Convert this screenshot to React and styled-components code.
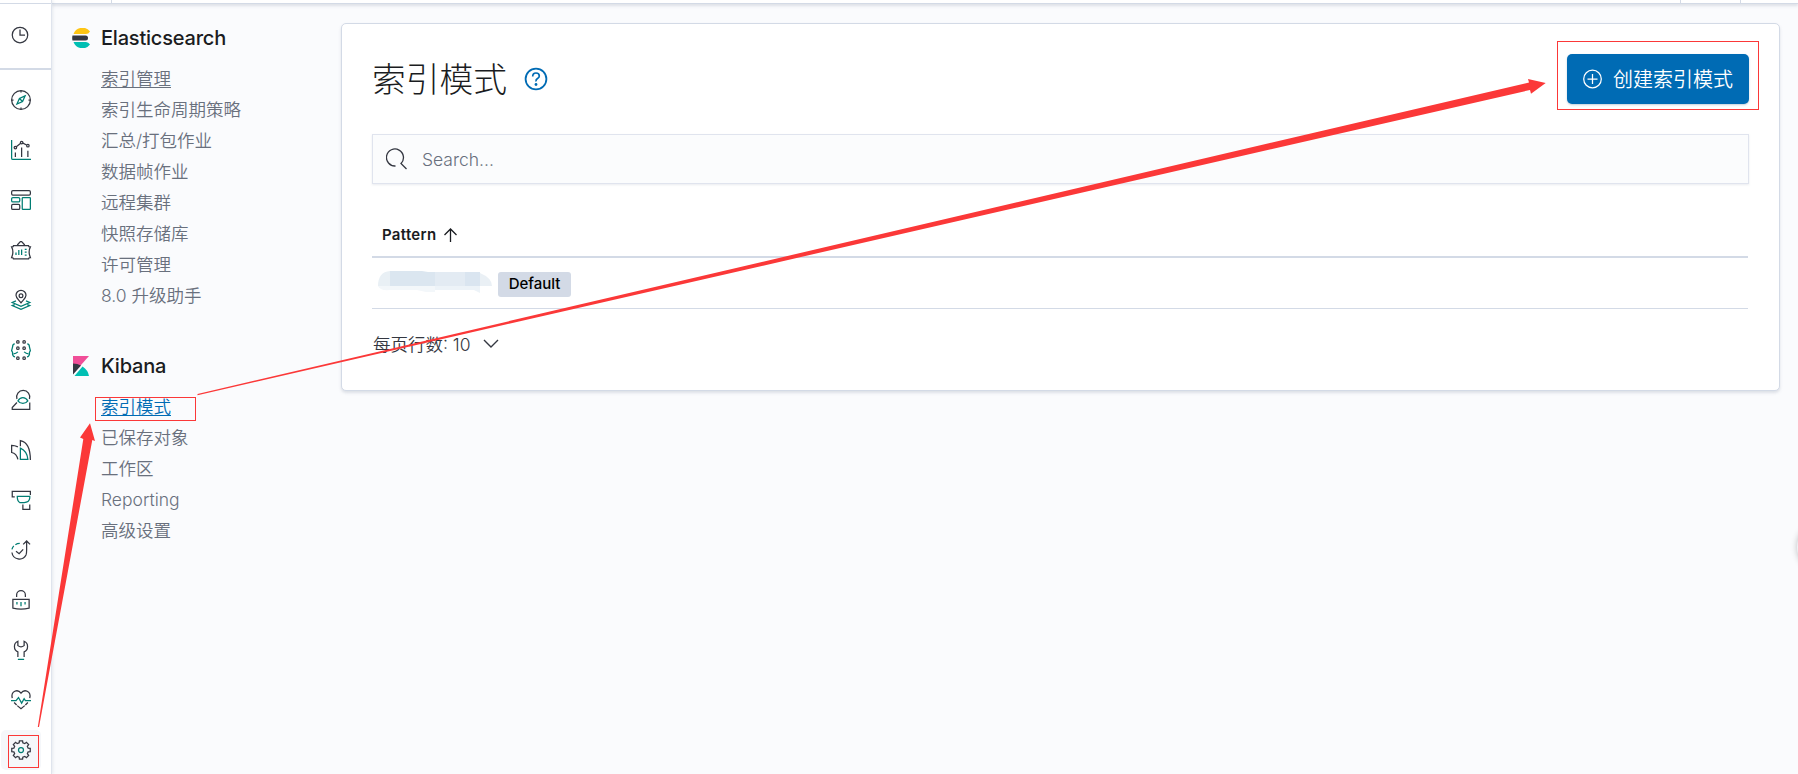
import React from "react";
import styled, { createGlobalStyle } from "styled-components";

const colors = {
  ink: "#343741",
  title: "#1a1c21",
  subdued: "#69707d",
  primary: "#006bb4",
  teal: "#017d73",
  border: "#d3dae6",
  page: "#fafbfd",
  white: "#ffffff",
  mark: "#fb3838",
};

const font = `Inter, "Noto Sans CJK SC", sans-serif`;

const GlobalStyle = createGlobalStyle`
  * {
    box-sizing: border-box;
  }

  body {
    margin: 0;
    overflow: hidden;
    font-family: ${font};
    font-size: 17.5px;
    color: ${colors.ink};
    background-color: ${colors.page};
  }
`;

const Page = styled.div`
  position: relative;
  display: flex;
  width: 100%;
  height: 100vh;
  overflow: hidden;
`;

const Rail = styled.nav`
  display: flex;
  flex-direction: column;
  flex: none;
  width: 52px;
  padding-top: 3px;
  background-color: ${colors.white};
  border-right: 1px solid #dfe4ed;
  box-shadow: 1px 0 3px rgba(152, 162, 179, 0.2);
  z-index: 1;
`;

const RecentItem = styled.div`
  display: flex;
  align-items: center;
  flex: none;
  height: 67px;
  padding: 0 0 2px 10px;
  border-top: 1px solid ${colors.border};
  border-bottom: 2px solid ${colors.border};
`;

const RailList = styled.div`
  display: flex;
  flex-direction: column;
  padding-top: 5px;
`;

const RailItem = styled.div`
  display: flex;
  align-items: center;
  justify-content: center;
  width: 40px;
  height: 40px;
  margin: 5px 0 5px 1px;
  border-radius: 5px;
  background-color: ${(props) => (props.$active ? "#f5f7fa" : "transparent")};
`;

const AppIcon = styled.svg`
  display: block;
  width: 20px;
  height: 20px;
  fill: none;
  stroke: ${colors.ink};
  stroke-width: 2;
  overflow: visible;

  .accent {
    stroke: ${colors.teal};
  }
`;

const Content = styled.div`
  display: flex;
  flex-direction: column;
  flex: 1;
  min-width: 0;
`;

const TopBar = styled.header`
  display: flex;
  justify-content: space-between;
  flex: none;
  height: 4px;
  padding-right: 57px;
  background-color: ${colors.white};
  border-bottom: 1px solid ${colors.border};
  box-shadow: 0 2px 3px rgba(152, 162, 179, 0.3);
`;

const TopCell = styled.div`
  width: ${(props) => props.$width}px;
  border-right: 1px solid ${colors.border};
  border-left: ${(props) => (props.$both ? `1px solid ${colors.border}` : "0")};
`;

const Body = styled.div`
  display: flex;
  align-items: flex-start;
  padding: 19px 18px 0 20px;
`;

const SideNav = styled.aside`
  display: flex;
  flex-direction: column;
  gap: 40px;
  flex: none;
  width: 269px;
`;

const SideHeading = styled.h2`
  display: flex;
  align-items: center;
  gap: 9px;
  height: 30px;
  margin: 0 0 10px;
  font-size: 20px;
  font-weight: 500;
  letter-spacing: -0.01em;
  color: ${colors.title};

  svg {
    display: block;
    width: 20px;
    height: 20px;
  }
`;

const SideLinks = styled.ul`
  margin: 0;
  padding: 0 0 0 29px;
  list-style: none;
`;

const SideLink = styled.li`
  height: 31px;
  line-height: 31px;
  font-weight: 350;
  white-space: nowrap;
  color: ${(props) => (props.$active ? colors.primary : colors.subdued)};
  text-decoration: ${(props) => (props.$underline ? "underline" : "none")};
  text-decoration-thickness: 1px;
  text-underline-offset: 2px;
`;

const Panel = styled.main`
  flex: 1;
  height: 368px;
  padding: 30px;
  background-color: ${colors.white};
  border: 1px solid ${colors.border};
  border-radius: 5px;
  box-shadow: 0 2px 3px rgba(152, 162, 179, 0.3);
`;

const PanelHeader = styled.div`
  display: flex;
  align-items: center;
  justify-content: space-between;
  height: 50px;
`;

const Heading = styled.div`
  display: flex;
  align-items: center;
  gap: 17px;

  h1 {
    margin: 0;
    padding-top: 2px;
    font-size: 33.75px;
    font-weight: 300;
    line-height: 50px;
    color: ${colors.title};
  }

  svg {
    display: block;
    width: 24px;
    height: 24px;
  }
`;

const CreateButton = styled.button`
  display: flex;
  align-items: center;
  gap: 10px;
  width: 182px;
  height: 50px;
  padding: 0 0 1px 15px;
  border: 0;
  border-radius: 5px;
  font-family: ${font};
  font-size: 20px;
  font-weight: 350;
  white-space: nowrap;
  color: ${colors.white};
  background-color: ${colors.primary};
  box-shadow: 0 1px 2px rgba(54, 97, 126, 0.3);
`;

const SearchBox = styled.div`
  display: flex;
  align-items: center;
  gap: 15px;
  height: 50px;
  margin-top: 30px;
  padding-left: 13px;
  font-weight: 350;
  color: ${colors.subdued};
  background-color: #fbfcfd;
  border: 1px solid #e0e4ee;
  box-shadow: 0 1px 2px rgba(152, 162, 179, 0.2);
`;

const TableHead = styled.div`
  display: flex;
  align-items: center;
  gap: 7px;
  height: 54px;
  margin: 20px 1px 0 0;
  padding: 9px 0 0 10px;
  font-size: 15px;
  font-weight: 600;
  letter-spacing: 0.02em;
  color: ${colors.title};
  border-bottom: 2px solid ${colors.border};
`;

const TableRow = styled.div`
  display: flex;
  align-items: center;
  gap: 5px;
  height: 51px;
  margin-right: 1px;
  padding: 2px 0 0 6px;
  border-bottom: 1px solid ${colors.border};
`;

const HiddenName = styled.svg`
  display: block;
  width: 115px;
  height: 24px;
  margin-top: -5px;
`;

const Badge = styled.span`
  display: inline-flex;
  align-items: center;
  justify-content: center;
  width: 73px;
  height: 25px;
  padding-bottom: 1px;
  border-radius: 3px;
  font-size: 15px;
  font-weight: 500;
  color: #000;
  background-color: ${colors.border};
`;

const Pagination = styled.div`
  display: flex;
  align-items: center;
  gap: 12px;
  height: 30px;
  margin-top: 19px;
  padding-left: 1px;
  font-weight: 350;

  svg {
    margin-top: 2px;
  }
`;

const FloatingHandle = styled.div`
  position: absolute;
  top: 522px;
  left: 1797px;
  width: 50px;
  height: 50px;
  border-radius: 50%;
  background-color: #f1f1f5;
  box-shadow: 0 0 6px rgba(0, 0, 0, 0.25);
`;

const Annotations = styled.svg`
  position: absolute;
  top: 0;
  left: 0;
  z-index: 2;
  pointer-events: none;
`;

// outline of the settings cog, eight flat teeth on a 32px grid
const cogPath = () => {
  const points = [];
  for (let i = 0; i < 8; i++) {
    const a = (i * Math.PI) / 4;
    [
      [-0.25, 11.8],
      [-0.17, 15],
      [0.17, 15],
      [0.25, 11.8],
    ].forEach(([offset, r]) => {
      const x = 16 + r * Math.sin(a + offset);
      const y = 16 - r * Math.cos(a + offset);
      points.push(`${x.toFixed(2)} ${y.toFixed(2)}`);
    });
  }
  return `M${points.join("L")}Z`;
};

const railIcons = {
  discover: (
    <>
      <circle cx="16" cy="16" r="15" />
      <path d="M16 1v3M16 28v3M1 16h3M28 16h3" />
      <path className="accent" d="M22.5 9.5l-9 4-4 9 9-4zM14 14l4 4" />
    </>
  ),
  visualize: (
    <>
      <path className="accent" d="M1 0v29a2 2 0 0 0 2 2h29" />
      <circle cx="7" cy="12" r="2" />
      <circle cx="17" cy="4" r="2" />
      <circle cx="27" cy="9" r="2" />
      <path d="M8.5 10.7l7-5.5M19 5l6 3M7 20v7M17 12v15M27 17v10" />
    </>
  ),
  dashboard: (
    <>
      <rect x="1" y="1" width="30" height="7" rx="2" />
      <rect x="1" y="23" width="13" height="8" rx="2" />
      <rect className="accent" x="1" y="12" width="13" height="7" rx="2" />
      <rect className="accent" x="18" y="12" width="13" height="19" rx="1" />
    </>
  ),
  canvas: (
    <>
      <path d="M4 9h24q0 2 3 2-2 4-2 8t2 9q-3 0-3 2H4q0-2-3-2 2-5 2-9t-2-8q3 0 3-2zM10 8l5-5.5h2L22 8" />
      <path
        className="accent"
        d="M8 20v4M12.5 16v8M17 15v9M22 15h3M22 19.5h3M22 24h3"
      />
    </>
  ),
  maps: (
    <>
      <path d="M16 20.500c-3-4-8-7-8-12a8 8 0 0 1 16 0c0 5-5 8-8 12z" />
      <circle cx="16" cy="9" r="3" />
      <path
        className="accent"
        d="M8 17.500l-6 2.500 14 6 14-6-6-2.500M6 23.500l-4 1.500 14 6 14-6-4-1.500"
      />
    </>
  ),
  machineLearning: (
    <>
      <circle cx="11" cy="3" r="2" />
      <circle cx="21" cy="3" r="2" />
      <circle cx="11" cy="13" r="2" />
      <circle cx="21" cy="13" r="2" />
      <circle cx="11" cy="29" r="2" />
      <circle cx="21" cy="29" r="2" />
      <path
        className="accent"
        d="M6 6Q2.500 6 2.500 11L1 17l1.500 3v3q1 4 4 4M4 22q4 0 7-3M26 6q3.500 0 3.500 5l1.500 6-1.500 3v3q-1 4-4 4M28 22q-4 0-7-3"
      />
    </>
  ),
  infra: (
    <>
      <path d="M9.500 14.500a10.500 10.500 0 1 1 20 0M9.500 20L2 28v3h28V20" />
      <path
        className="accent"
        d="M11 17.500q3-5.500 8-5.500t8 5.500q-3 4-8 4t-8-4z"
      />
    </>
  ),
  apm: (
    <>
      <path d="M11 11Q6 8.500 1 8.500V20q8 1.500 10 11M15 10V1q16 3 16 31" />
      <path className="accent" d="M15 13v18h12q-1-13-12-18z" />
    </>
  ),
  logs: (
    <>
      <path d="M31 8V2H2v9h4M19 23v8h11v-8" />
      <path className="accent" d="M10 10h20v3q-1 7-9 7h-7q-4-2-4-10z" />
    </>
  ),
  uptime: (
    <>
      <path d="M1.500 20A12 12 0 0 0 24 24q1-2 1-8V2M19.500 7L25 1.500 30.500 7M8 18l5 4 6.500-7" />
      <path className="accent" d="M1.500 15a12 12 0 0 1 3-5.500M7 7.500q3-2 7-2" />
    </>
  ),
  siem: (
    <>
      <path d="M9 11V8a7 7 0 0 1 14 0v3M3 15h26v14q-13 3-26 0z" />
      <path className="accent" d="M9.500 19v4M16 19v7M22.500 19v4" />
    </>
  ),
  devTools: (
    <>
      <path d="M11 27v-8Q5.500 17 5.500 10.500 5.500 4 11 2v7q5 4 10 0V2q5.500 2 5.500 8.500T21 19v8" />
      <path className="accent" d="M11 31h10" />
    </>
  ),
  monitoring: (
    <>
      <path d="M2 13Q0 5 6 2q6-2.500 10 3 4-5.500 10-3 6 3 4 11M5 20l4 4M10 25l6 5 6-5M23 24l4-4" />
      <path className="accent" d="M0 17h8l4-5 5 9 4-7 2 3h9" />
    </>
  ),
  management: (
    <>
      <path d={cogPath()} />
      <circle className="accent" cx="16" cy="16" r="4" />
    </>
  ),
};

const elasticLinks = [
  "索引管理",
  "索引生命周期策略",
  "汇总/打包作业",
  "数据帧作业",
  "远程集群",
  "快照存储库",
  "许可管理",
  "8.0 升级助手",
];

const kibanaLinks = ["索引模式", "已保存对象", "工作区", "Reporting", "高级设置"];

const ElasticLogo = () => (
  <svg viewBox="0 0 20 20">
    <path d="M1.500 6A9.500 9.500 0 0 1 18 3.500Q16.500 6 14 6z" fill="#fec514" />
    <path d="M.5 7.500h13a2.500 2.500 0 0 1 0 5H.5a10 10 0 0 1 0-5z" fill="#343741" />
    <path d="M1.500 14H14q2.500 0 4 2.500A9.500 9.500 0 0 1 1.500 14z" fill="#00bfb3" />
  </svg>
);

const KibanaLogo = () => (
  <svg viewBox="0 0 20 20">
    <path d="M1 0h16L1 18z" fill="#f04e98" />
    <path d="M1 7.500q4.500 0 8 2L1 18.500z" fill="#343741" />
    <path d="M10.500 10.500Q16 14 17 20H2.500z" fill="#00bfb3" />
  </svg>
);

const SideSection = ({ title, logo, links, active, underlined }) => (
  <section>
    <SideHeading>
      {logo}
      {title}
    </SideHeading>
    <SideLinks>
      {links.map((link) => (
        <SideLink
          key={link}
          $active={link === active}
          $underline={link === underlined}
        >
          {link}
        </SideLink>
      ))}
    </SideLinks>
  </section>
);

const IndexPatterns = () => (
  <Panel>
    <PanelHeader>
      <Heading>
        <h1>索引模式</h1>
        <svg viewBox="0 0 24 24" fill="none" stroke={colors.primary}>
          <circle cx="12" cy="12" r="10.400" strokeWidth="1.800" />
          <path
            d="M8.700 9.500Q8.700 6 12 6t3.300 3Q15.300 10.500 13.500 11.500T12 14.500"
            strokeWidth="1.700"
          />
          <circle cx="12" cy="17.500" r="1.400" fill={colors.primary} stroke="none" />
        </svg>
      </Heading>
      <CreateButton>
        <svg width="21" height="20" viewBox="0 0 21 20" fill="none" stroke="#fff">
          <circle cx="10.500" cy="10" r="8.800" strokeWidth="1.250" />
          <path d="M10.500 5v10M5.500 10h10" strokeWidth="1.250" />
        </svg>
        创建索引模式
      </CreateButton>
    </PanelHeader>
    <SearchBox>
      <svg
        width="21"
        height="22"
        viewBox="0 0 21 22"
        fill="none"
        stroke={colors.ink}
        strokeWidth="1.300"
      >
        <path d="M9.500 18A8.500 8.500 0 1 1 15 15.500L20.500 21" />
      </svg>
      Search...
    </SearchBox>
    <TableHead>
      Pattern
      <svg
        width="15"
        height="14"
        viewBox="0 0 15 14"
        fill="none"
        stroke={colors.title}
        strokeWidth="1.300"
      >
        <path d="M7.500 14V1M1.500 7l6-6 6 6" />
      </svg>
    </TableHead>
    <TableRow>
      <HiddenName viewBox="0 0 115 24">
        <path d="M12 1v15H0Q0 2 12 1z" fill="#e9f0f5" />
        <path d="M12 1h32l6 1h7v14H12z" fill="#dbe6f0" />
        <path d="M57 2h30v14H57z" fill="#e3ebf3" />
        <path d="M87 2h15v14H87z" fill="#dae5f0" />
        <path d="M102 3q12 5 12 13h-12z" fill="#eaf0f5" />
        <path d="M0 16h57v6h-9l-9-2H12Q2 21 0 16z" fill="#f3f7fa" />
        <path d="M57 16h45v7l-6-3H57z" fill="#edf3f8" />
      </HiddenName>
      <Badge>Default</Badge>
    </TableRow>
    <Pagination>
      每页行数: 10
      <svg
        width="16"
        height="10"
        viewBox="0 0 16 10"
        fill="none"
        stroke={colors.ink}
        strokeWidth="1.400"
      >
        <path d="M1 1l7 7 7-7" />
      </svg>
    </Pagination>
  </Panel>
);

const App = () => {
  return (
    <>
      <GlobalStyle />
      <Page>
        <Rail>
          <RecentItem>
            <svg
              width="20"
              height="20"
              viewBox="0 0 16 16"
              fill="none"
              stroke={colors.ink}
            >
              <circle cx="8" cy="8" r="6.200" />
              <path d="M8 3.500V8h4" />
            </svg>
          </RecentItem>
          <RailList>
            {Object.keys(railIcons).map((name) => (
              <RailItem key={name} $active={name === "management"}>
                <AppIcon viewBox="0 0 32 32">{railIcons[name]}</AppIcon>
              </RailItem>
            ))}
          </RailList>
        </Rail>
        <Content>
          <TopBar>
            <TopCell $width={60} />
            <TopCell $width={61} $both />
          </TopBar>
          <Body>
            <SideNav>
              <SideSection
                title="Elasticsearch"
                logo={<ElasticLogo />}
                links={elasticLinks}
                underlined="索引管理"
              />
              <SideSection
                title="Kibana"
                logo={<KibanaLogo />}
                links={kibanaLinks}
                active="索引模式"
                underlined="索引模式"
              />
            </SideNav>
            <IndexPatterns />
          </Body>
        </Content>
        <FloatingHandle />
        <Annotations width="1798" height="774" viewBox="0 0 1798 774">
          <g fill="none" stroke={colors.mark}>
            <rect x="8.500" y="735.500" width="30" height="32" />
            <rect x="95.500" y="397.500" width="100" height="23" />
            <rect x="1557.500" y="41.500" width="201" height="68" />
          </g>
          <g fill={colors.mark}>
            <path d="M37.800 727L83.300 439 80 437.600 90 423.300 95 441 92.300 440 39 727z" />
            <path d="M197.500 394L1529 82.500 1528 79 1545.700 83 1531 93.700 1530 90 197.500 395.200z" />
          </g>
        </Annotations>
      </Page>
    </>
  );
};

export default App;
